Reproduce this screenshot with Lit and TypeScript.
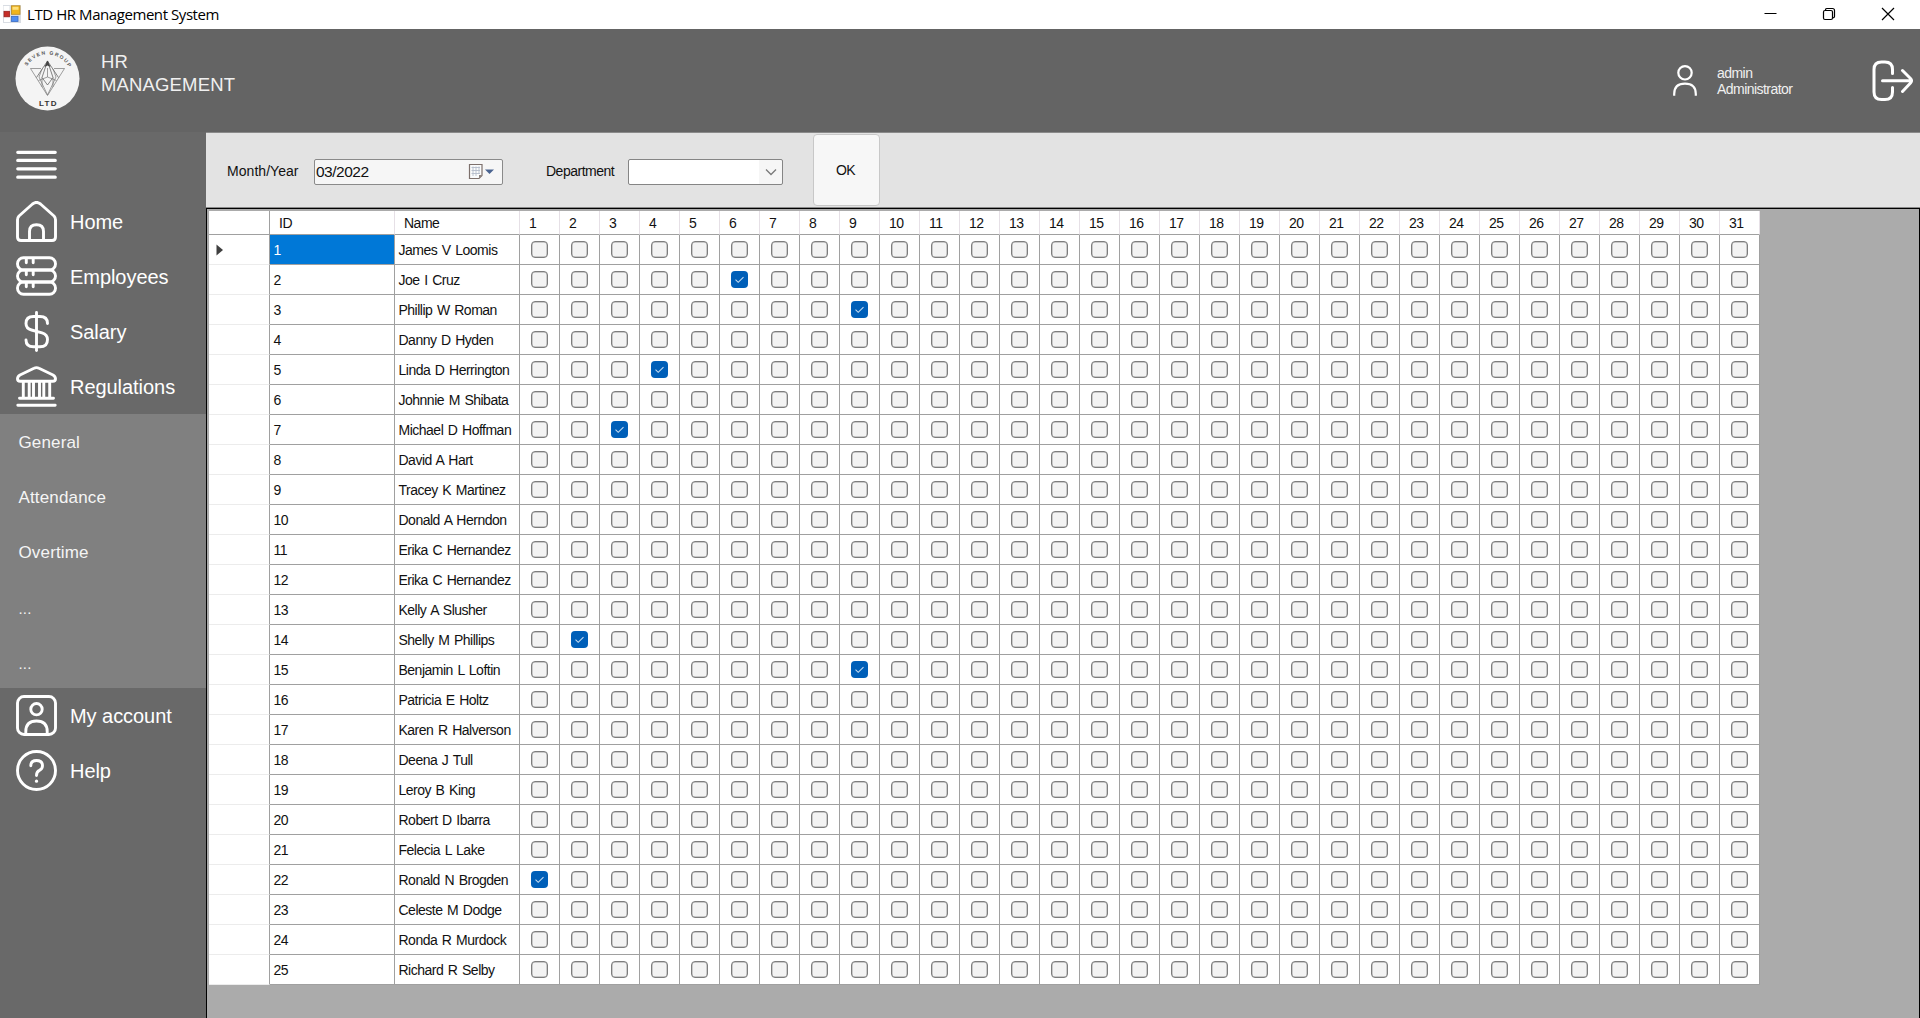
import { LitElement, html, css, svg, nothing } from "lit";
import { customElement, property } from "lit/decorators.js";
import { classMap } from "lit/directives/class-map.js";

interface Employee {
  name: string;
  days: number[];
}

const DAYS = Array.from({ length: 31 }, (_, i) => i + 1);

const EMPLOYEES: Employee[] = [
  { name: "James V Loomis", days: [] },
  { name: "Joe I Cruz", days: [6] },
  { name: "Phillip W Roman", days: [9] },
  { name: "Danny D Hyden", days: [] },
  { name: "Linda D Herrington", days: [4] },
  { name: "Johnnie M Shibata", days: [] },
  { name: "Michael D Hoffman", days: [3] },
  { name: "David A Hart", days: [] },
  { name: "Tracey K Martinez", days: [] },
  { name: "Donald A Herndon", days: [] },
  { name: "Erika C Hernandez", days: [] },
  { name: "Erika C Hernandez", days: [] },
  { name: "Kelly A Slusher", days: [] },
  { name: "Shelly M Phillips", days: [2] },
  { name: "Benjamin L Loftin", days: [9] },
  { name: "Patricia E Holtz", days: [] },
  { name: "Karen R Halverson", days: [] },
  { name: "Deena J Tull", days: [] },
  { name: "Leroy B King", days: [] },
  { name: "Robert D Ibarra", days: [] },
  { name: "Felecia L Lake", days: [] },
  { name: "Ronald N Brogden", days: [1] },
  { name: "Celeste M Dodge", days: [] },
  { name: "Ronda R Murdock", days: [] },
  { name: "Richard R Selby", days: [] },
];

/* Menu icons share a 41x41 box and a white stroke. */
const ICONS: Record<string, unknown> = {
  menu: svg`<path d="M1.8 7.3H39.2M1.8 15.4H39.2M1.8 23.8H39.2M1.8 32.2H39.2" stroke-width="3.3"/>`,
  home: svg`<path d="M1.5 18.8Q1.5 16.6 3 15L16.5 3Q20.5 -.2 24.5 3L38 15Q39.5 16.6 39.5 18.8V36Q39.5 39.5 36 39.5H5Q1.5 39.5 1.5 36Z"/><path d="M13.5 39V30.5Q13.5 23.8 20.5 23.8Q27.5 23.8 27.5 30.5V39"/>`,
  employees: svg`<rect x="1.5" y="1.8" width="38" height="12.2" rx="6"/><rect x="1.5" y="14" width="38" height="12" rx="6"/><rect x="1.5" y="26" width="38" height="12.2" rx="6"/><path d="M10.3 3V6.7M17.2 3V6.7M10.3 15V18.7M17.2 15V18.7M10.3 27V30.7M17.2 27V30.7"/>`,
  salary: svg`<path d="M20.5 1.5V39.5"/><path d="M31.5 12.5Q31.5 5.5 24 5.5H17.5Q10 5.5 10 12.5Q10 17.5 15.5 19L26 21.8Q31.5 23.5 31.5 28.5Q31.5 35.8 24 35.8H17.5Q10 35.8 10 29"/>`,
  regulations: svg`<path d="M18 2.3Q20.5 1 23 2.3L37 9Q39.5 10.5 39.5 13Q39.5 15.2 36.8 15.2H4.2Q1.5 15.2 1.500 13Q1.5 10.5 4 9Z"/><path d="M7.3 16V32M13.200 16V32M17.5 16V32M23.5 16V32M27.800 16V32M33.7 16V32M3.5 32.3H37.5M1.8 39.2H39.2"/>`,
  account: svg`<rect x="1.5" y="1.5" width="38" height="38" rx="6.5"/><circle cx="20.5" cy="14.2" r="5.7"/><path d="M9.8 39V36.5Q9.8 26 20.5 26Q31.2 26 31.2 36.5V39"/>`,
  help: svg`<circle cx="20.5" cy="20.5" r="19"/><path d="M14.8 15.8Q14.8 10.5 20.5 10.5Q26.5 10.5 26.5 15.8Q26.5 18.8 23.4 20.4Q20.5 21.8 20.5 25.5"/><path d="M20.5 31V31.2" stroke-width="3.2"/>`,
};

@customElement("menu-item")
export class MenuItem extends LitElement {
  @property() icon = "";
  @property() label = "";

  static styles = css`
    :host {
      display: flex;
      align-items: center;
      gap: 13px;
      height: 55px;
      padding-left: 16px;
      box-sizing: border-box;
      color: #fff;
      font: 20px "Liberation Sans", Arial, sans-serif;
      letter-spacing: -0.05px;
    }
    .icon {
      width: 41px;
      height: 41px;
      flex: none;
    }
    .text {
      padding-top: 2px;
    }
  `;

  render() {
    return html`
      <svg class="icon" viewBox="0 0 41 41" fill="none" stroke="#fff" stroke-width="2.9" stroke-linecap="round" stroke-linejoin="round">
        ${ICONS[this.icon]}
      </svg>
      ${this.label ? html`<span class="text">${this.label}</span>` : nothing}
    `;
  }
}

@customElement("attendance-grid")
export class AttendanceGrid extends LitElement {
  static styles = css`
    :host {
      display: block;
      font: 14px "Liberation Sans", Arial, sans-serif;
      letter-spacing: -0.5px;
      word-spacing: 1.2px;
      color: #111;
    }
    .row {
      display: grid;
      grid-template-columns: 61px 125px 125px repeat(31, 40px);
      width: 1551px;
      height: 30px;
      background: #fff;
    }
    .head {
      height: 24px;
    }
    .cell {
      display: flex;
      align-items: center;
      box-sizing: border-box;
      border-right: 1px solid #a0a0a0;
      border-bottom: 1px solid #a0a0a0;
      padding: 1px 0 0 3.5px;
      white-space: nowrap;
    }
    .head .cell {
      border-right-color: #e6e0e6;
      padding-left: 9px;
      padding-top: 0;
    }
    .head .corner {
      border-right-color: #a0a0a0;
    }
    .row-head {
      border-bottom-color: #ececec;
      padding-left: 7px;
    }
    .selected {
      background: #0078d7;
      color: #fff;
    }
    .day {
      padding: 0 0 0 11px;
    }
    .box {
      width: 17px;
      height: 17px;
      box-sizing: border-box;
      border: 1px solid #7d7d7d;
      box-shadow: inset 0 0 0 0.5px #a0a0a0;
      border-radius: 4px;
      background: #f3f3f3;
    }
    .checked {
      border: none;
      box-shadow: none;
      background: #005fb8;
    }
    .tick {
      display: block;
      width: 17px;
      height: 17px;
    }
  `;

  private renderDay(checked: boolean) {
    return html`<div class="cell day">
      <div class=${classMap({ box: true, checked })}>
        ${checked
          ? html`<svg class="tick" viewBox="0 0 17 17" fill="none" stroke="#c5dcf0" stroke-width="1.1"><path d="M4.5 8.7L7.2 11.3L12.5 6.2" /></svg>`
          : nothing}
      </div>
    </div>`;
  }

  render() {
    return html`
      <div class="row head">
        <div class="cell corner"></div>
        <div class="cell">ID</div>
        <div class="cell">Name</div>
        ${DAYS.map((d) => html`<div class="cell">${d}</div>`)}
      </div>
      ${EMPLOYEES.map(
        (e, i) => html`<div class="row">
          <div class="cell row-head">
            ${i === 0
              ? html`<svg width="8" height="12" viewBox="0 0 8 12"><path d="M.5 .5L7 6L.5 11.5Z" fill="#404040" /></svg>`
              : nothing}
          </div>
          <div class=${classMap({ cell: true, selected: i === 0 })}>${i + 1}</div>
          <div class="cell">${e.name}</div>
          ${DAYS.map((d) => this.renderDay(e.days.includes(d)))}
        </div>`
      )}
    `;
  }
}

@customElement("app-root")
export class AppRoot extends LitElement {
  static styles = css`
    :host {
      display: flex;
      flex-direction: column;
      width: 1920px;
      height: 1018px;
      overflow: hidden;
      font: 14px "Liberation Sans", Arial, sans-serif;
      color: #111;
    }
    .titlebar {
      display: flex;
      align-items: center;
      height: 29px;
      flex: none;
      box-sizing: border-box;
      padding: 0 24px 0 3px;
      background: #fff;
      color: #000;
      font: 15px "Open Sans", "Noto Sans", sans-serif;
    }
    .app-icon {
      margin-right: 6px;
      margin-bottom: 1px;
    }
    .title {
      flex: 1;
      letter-spacing: -0.43px;
      padding-bottom: 2px;
    }
    .controls {
      display: flex;
      gap: 45px;
      padding-right: 1px;
      padding-bottom: 1px;
    }
    .header {
      display: flex;
      height: 103px;
      flex: none;
      box-sizing: border-box;
      padding-left: 15px;
      background: #646464;
      color: #f0f0f0;
    }
    .logo {
      margin-top: 17px;
    }
    .brand {
      flex: 1;
      margin: 22px 0 0 21px;
      font-size: 18.5px;
      line-height: 22.5px;
      letter-spacing: 0.15px;
    }
    .person {
      margin: 36px 20px 0 0;
    }
    .account {
      width: 155px;
      margin-top: 36px;
      line-height: 16px;
      letter-spacing: -0.55px;
    }
    .exit {
      margin: 31px 6px 0 0;
    }
    .body {
      display: flex;
      flex: 1;
      min-height: 0;
    }
    .sidebar {
      width: 206px;
      flex: none;
      background: #696969;
    }
    .toggle {
      height: 62px;
      padding-top: 13px;
      align-items: flex-start;
    }
    .submenu {
      height: 274px;
      background: #808080;
      color: #f5f5f5;
      font-size: 17px;
      letter-spacing: 0.15px;
    }
    .sub {
      display: flex;
      align-items: center;
      height: 55px;
      box-sizing: border-box;
      padding: 2px 0 0 18.5px;
    }
    .dots {
      font-size: 15px;
      padding-top: 3px;
    }
    .main {
      display: flex;
      flex-direction: column;
      flex: 1;
      min-width: 0;
    }
    .toolbar {
      display: flex;
      align-items: center;
      height: 76px;
      flex: none;
      box-sizing: border-box;
      padding: 2px 0 1px 21px;
      background: #e3e3e3;
      border-top: 1px solid #8a8a8a;
      border-bottom: 1px solid #8a8a8a;
      letter-spacing: -0.5px;
    }
    .label-month {
      width: 87px;
      letter-spacing: 0.05px;
    }
    .label-dept {
      width: 82px;
    }
    .date {
      display: flex;
      align-items: center;
      justify-content: space-between;
      width: 189px;
      height: 26px;
      box-sizing: border-box;
      margin: 3px 43px 0 0;
      padding: 0 8px 0 1px;
      border: 1px solid #8a8a8a;
      border-radius: 2px;
      background: #f6f6f6;
      font-size: 15.5px;
    }
    .combo {
      display: flex;
      align-items: center;
      justify-content: flex-end;
      width: 155px;
      height: 26px;
      box-sizing: border-box;
      margin: 2px 30px 0 0;
      border: 1px solid #858585;
      border-radius: 2px;
      background: linear-gradient(90deg, #fff 130px, #f6f6f6 130px);
      padding-right: 5px;
    }
    .ok {
      display: flex;
      align-items: center;
      justify-content: center;
      width: 67px;
      height: 72px;
      box-sizing: border-box;
      margin-bottom: 1px;
      padding-right: 2px;
      border: 1px solid #c8c8c8;
      border-radius: 4px;
      background: #f7f7f7;
    }
    .panel {
      flex: 1;
      min-height: 0;
      border: 1px solid #000;
      border-bottom: none;
      background: #ababab;
      padding: 2px 0 0 2px;
      overflow: hidden;
    }
  `;

  render() {
    return html`
      <div class="titlebar">
        <svg class="app-icon" width="18" height="18" viewBox="0 0 18 18">
          <rect width="18" height="18" fill="#d9dde3" />
          <rect x=".5" y="1" width="6" height="5" fill="#fff" />
          <rect x="1" y="12" width="6" height="5" fill="#fff" />
          <rect x="8.5" y=".8" width="8.5" height="8.5" fill="#efb41c" stroke="#b98a20" stroke-width=".8" />
          <rect x="9.5" y="1.8" width="6" height="3" fill="#ffe07a" />
          <rect x="1" y="6.3" width="5.5" height="5.5" fill="#c62d28" stroke="#9c2420" stroke-width=".8" />
          <rect x="8.5" y="11.5" width="6.5" height="5" fill="#4f8df0" stroke="#3a6cc4" stroke-width=".8" />
        </svg>
        <div class="title">LTD HR Management System</div>
        <div class="controls">
          <svg width="14" height="14" viewBox="0 0 14 14"><path d="M1.500 6.500H13.500" stroke="#000" /></svg>
          <svg width="14" height="14" viewBox="0 0 14 14" fill="none" stroke="#000" stroke-width="1.2">
            <rect x="1.5" y="3.5" width="9" height="9" rx="1.5" />
            <path d="M3.5 3.5V2.5Q3.7 1.5 5 1.5H10.5Q12.5 1.5 12.5 3.5V9.5Q12.5 10.5 11 11" />
          </svg>
          <svg width="14" height="14" viewBox="0 0 14 14"><path d="M1 1L13 13M13 1L1 13" stroke="#000" stroke-width="1.2" /></svg>
        </div>
      </div>
      <div class="header">
        <svg class="logo" width="65" height="65" viewBox="0 0 65 65">
          <defs><path id="arc" d="M8.5 32.5A24 24 0 0 1 56.5 32.5" /></defs>
          <circle cx="32.5" cy="32.5" r="32" fill="#f4f4f4" />
          <text font-size="5" font-weight="bold" fill="#555" font-family="Liberation Sans"><textPath href="#arc" startOffset="13" textLength="50">SEVEN GROUP</textPath></text>
          <g fill="none" stroke="#777" stroke-width=".7">
            <path d="M15.5 22.5H26M39 22.5H49.5L32.5 49.5L15.5 22.5" />
            <path d="M32.5 15L21.500 31.500M32.5 15L43.500 31.500" stroke="#555" />
            <path d="M32.5 15L27 31.5L32.500 39L38 31.500Z" stroke="#555" />
            <path d="M32.5 22V31L23.5 34.500M32.5 31L41.5 34.500M27 23L24 31L32.500 49M38 23L41 31L32.500 49M27 31.500V41M38 31.500V41" />
            <path d="M32.5 14.500L29.500 21L32.5 19.500L35.500 21Z" fill="#444" stroke="none" />
          </g>
          <text x="24" y="60.3" font-size="8" font-weight="bold" fill="#333" font-family="Liberation Sans" textLength="17.500">LTD</text>
        </svg>
        <div class="brand">HR<br />MANAGEMENT</div>
        <svg class="person" width="24" height="32" viewBox="0 0 24 32" fill="none" stroke="#fff" stroke-width="2.2">
          <circle cx="12" cy="7.8" r="6.7" />
          <path d="M1.2 30.8V29Q1.2 18.7 12 18.7Q22.8 18.7 22.8 29V30.8" />
        </svg>
        <div class="account">admin<br />Administrator</div>
        <svg class="exit" width="42" height="42" viewBox="0 0 42 42" fill="none" stroke="#fff" stroke-width="3" stroke-linecap="round" stroke-linejoin="round">
          <path d="M20.5 13.5V9.5Q20.5 2 13 2H9.5Q2 2 2 9.5V32Q2 39.5 9.5 39.5H13Q20.5 39.5 20.5 32V27.5" />
          <path d="M10.5 20.700H39.5M30.500 10.5L38.5 18.5Q40.5 20.7 38.500 23L30.500 31.5" />
        </svg>
      </div>
      <div class="body">
        <nav class="sidebar">
          <menu-item class="toggle" icon="menu"></menu-item>
          <menu-item icon="home" label="Home"></menu-item>
          <menu-item icon="employees" label="Employees"></menu-item>
          <menu-item icon="salary" label="Salary"></menu-item>
          <menu-item icon="regulations" label="Regulations"></menu-item>
          <div class="submenu">
            ${["General", "Attendance", "Overtime", "...", "..."].map(
              (t) => html`<div class=${classMap({ sub: true, dots: t === "..." })}>${t}</div>`
            )}
          </div>
          <menu-item icon="account" label="My account"></menu-item>
          <menu-item icon="help" label="Help"></menu-item>
        </nav>
        <div class="main">
          <div class="toolbar">
            <div class="label-month">Month/Year</div>
            <div class="date">
              <span>03/2022</span>
              <svg width="26" height="18" viewBox="0 0 26 18">
                <path d="M1.5 1.5H14V12.5L11 15.5H1.5Z" fill="#fafbfc" stroke="#7d706c" stroke-width="1.2" />
                <path d="M3.5 4.5H12M3.5 7.5H12M3.5 10.5H12M5 3.5V13M8 3.5V13M11 3.5V11" stroke="#b4bccb" stroke-width=".9" />
                <path d="M14 12H11V15.5Z" fill="#8d8380" />
                <path d="M17 6.5H26L21.5 11Z" fill="#4a6490" />
              </svg>
            </div>
            <div class="label-dept">Department</div>
            <div class="combo">
              <svg width="12" height="8" viewBox="0 0 12 8" fill="none" stroke="#7a7a7a" stroke-width="1.3"><path d="M1 1.5L6 6.5L11 1.5" /></svg>
            </div>
            <div class="ok">OK</div>
          </div>
          <div class="panel"><attendance-grid></attendance-grid></div>
        </div>
      </div>
    `;
  }
}
